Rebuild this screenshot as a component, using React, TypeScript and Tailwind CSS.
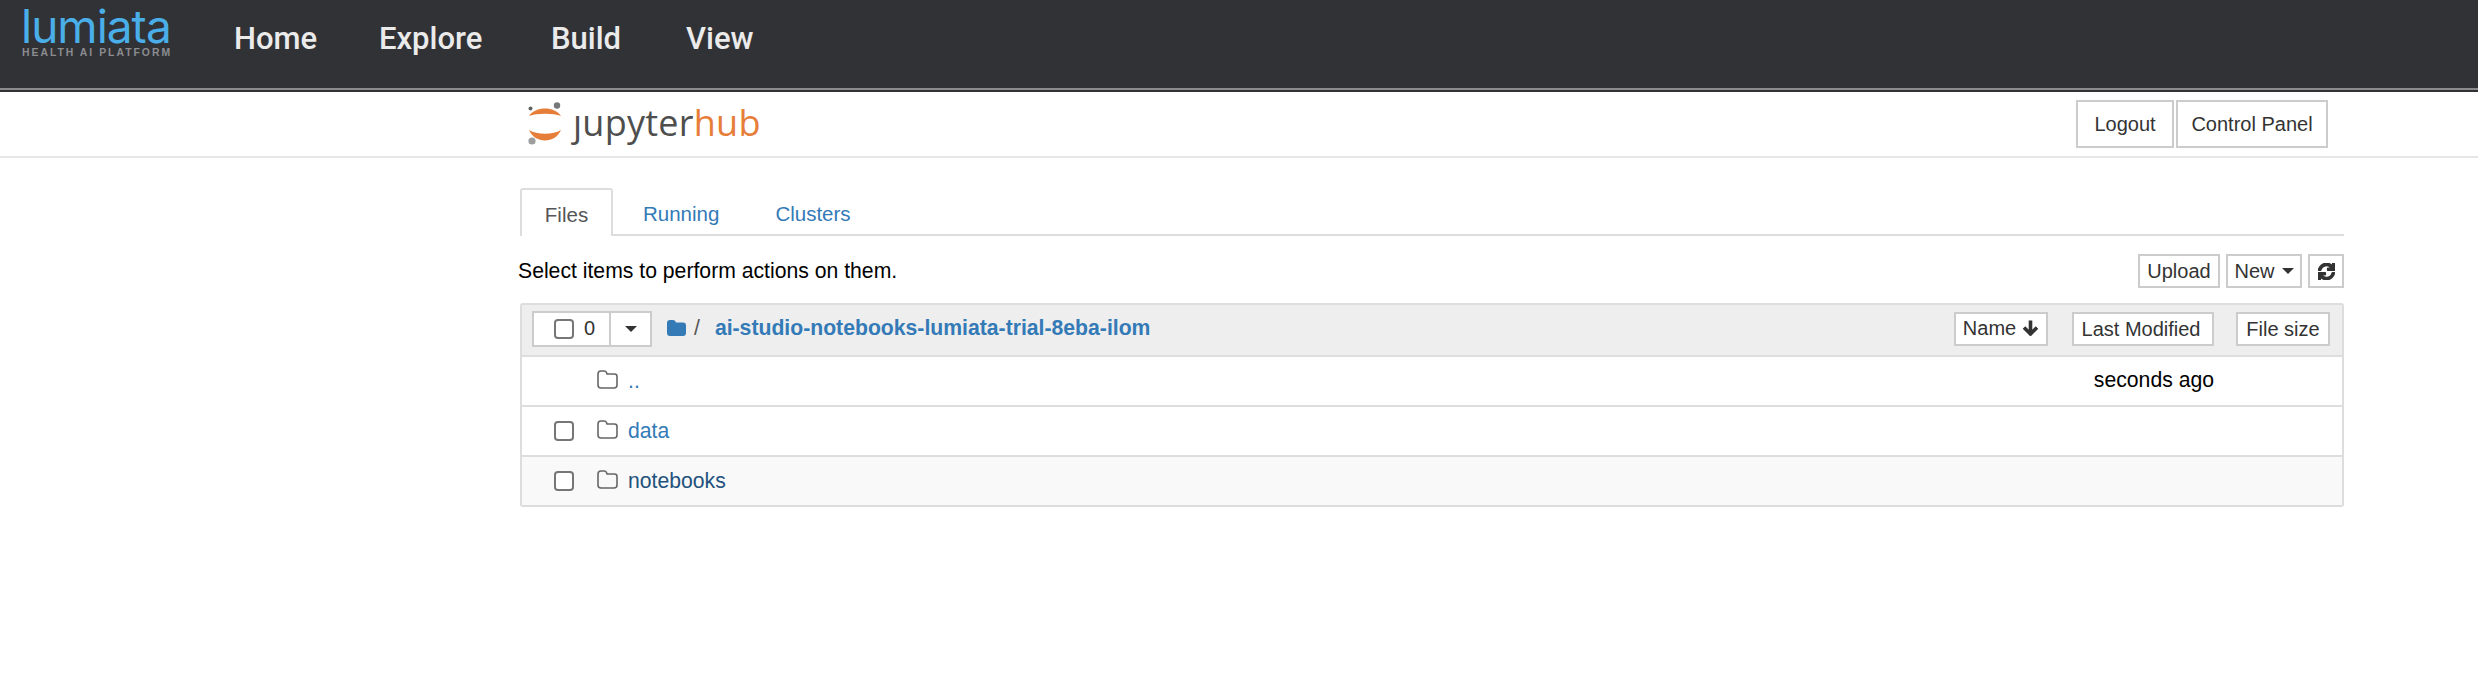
import React from 'react';
import { FaSync } from 'react-icons/fa';

const navItems = [
  { label: 'Home', className: 'w-[145px]' },
  { label: 'Explore', className: 'w-[172px]' },
  { label: 'Build', className: 'w-[135px]' },
  { label: 'View', className: 'w-[90px]' },
];

const Caret = () => (
  <span className="inline-block w-0 h-0 border-x-[6px] border-x-transparent border-t-[6px] border-t-[#333]" />
);

const Checkbox = () => (
  <input
    type="checkbox"
    readOnly
    className="appearance-none block w-5 h-5 bg-white border-2 border-[#767676] rounded-[4px]"
  />
);

const FolderOutline = () => (
  <svg width="21" height="19" viewBox="0 0 21 19" className="shrink-0 -mt-[3px]">
    <path
      d="M1 4 Q1 1 4 1 H7 Q9 1 9.5 2.5 L10 4 H17.5 Q20 4 20 6.5 V15 Q20 18 17 18 H4 Q1 18 1 15 Z"
      fill="none"
      stroke="#666"
      strokeWidth="1.6"
    />
  </svg>
);

const FolderSolid = () => (
  <svg width="19" height="16" viewBox="0 0 19 16" className="shrink-0 -mt-[2px]">
    <path
      d="M0 3 Q0 0 3 0 H6 Q8 0 8.5 1.5 L9 2.5 H16 Q19 2.5 19 5.5 V13 Q19 16 16 16 H3 Q0 16 0 13 Z"
      fill="#337ab7"
    />
  </svg>
);

const ArrowDown = () => (
  <svg width="17" height="17" viewBox="0 0 17 17" className="shrink-0">
    <path d="M8.5 1.5 V14 M2 8.5 L8.5 15 L15 8.5" fill="none" stroke="#333" strokeWidth="3.6" />
  </svg>
);

const JupyterMark = () => (
  <svg width="36" height="44" viewBox="0 0 36 44" className="shrink-0">
    <path d="M2 14 C8 4 28 4 34 14 C26 11 10 11 2 14 Z" fill="#e67e3a" />
    <path d="M2 28 C10 33 26 33 34 28 C28 42 8 42 2 28 Z" fill="#e67e3a" />
    <circle cx="30" cy="3.5" r="3.2" fill="#77787a" />
    <circle cx="3.5" cy="6.5" r="2" fill="#616262" />
    <circle cx="5" cy="39" r="3.6" fill="#9e9e9e" />
  </svg>
);

const FileRow = ({
  name,
  modified,
  striped,
  dark,
  noCheck,
}: {
  name: string;
  modified?: string;
  striped?: boolean;
  dark?: boolean;
  noCheck?: boolean;
}) => (
  <div className={`flex items-center h-[50px] border-t-2 border-[#ddd] ${striped ? 'bg-[#f9f9f9]' : 'bg-white'}`}>
    <div className="w-[32px]" />
    <div className="w-[43px]">{!noCheck && <Checkbox />}</div>
    <FolderOutline />
    <a className={`ml-[10px] pb-[1px] ${dark ? 'text-[#23527c]' : 'text-[#337ab7]'}`}>{name}</a>
    {modified && <span className="ml-auto mr-[128px] pb-[3px] text-black">{modified}</span>}
  </div>
);

export default function App() {
  return (
    <div className="h-[678px] bg-white text-[21.2px] text-[#333] font-['Liberation_Sans',Arial,sans-serif] overflow-hidden">
      {/* Lumiata top bar */}
      <div className="bg-[#313236] h-[92px]">
        <div className="flex h-[88px]">
          <div className="w-[234px] pl-[21px] pt-[5px] shrink-0">
            <div className="text-[#4aaee8] text-[46px] leading-[42px] font-['Inter',sans-serif] font-normal tracking-[-1px]">
              lumiata
            </div>
            <div className="text-[#8b8c90] text-[10.4px] leading-[10px] mt-[1px] font-bold tracking-[2px] pl-[1px] whitespace-nowrap">
              HEALTH AI PLATFORM
            </div>
          </div>
          <nav className="flex items-start pt-[18px] text-[#ebebeb] text-[31px] leading-[42px] font-['Roboto',sans-serif] font-medium">
            {navItems.map((item) => (
              <a key={item.label} className={item.className}>
                {item.label}
              </a>
            ))}
          </nav>
        </div>
        <div className="h-[2px] bg-[#8a8a8a]" />
      </div>

      {/* Hub header */}
      <div className="flex h-[66px] border-b-2 border-[#e7e7e7]">
        <div className="flex items-start ml-[527px] pt-[10px]">
          <JupyterMark />
          <div className="ml-[10px] text-[36px] leading-[42px] font-['Open_Sans',sans-serif] tracking-[0.25px]">
            <span className="text-[#4e4e4e]">ȷupyter</span>
            <span className="text-[#e67e3a]">hub</span>
          </div>
        </div>
        <div className="flex ml-auto mr-[150px] mt-[8px] gap-[2px] h-[48px] text-[20px]">
          <button className="w-[98px] pb-[1px] border-2 border-[#ccc] bg-white">Logout</button>
          <button className="w-[152px] pb-[1px] border-2 border-[#ccc] bg-white">Control Panel</button>
        </div>
      </div>

      <div className="w-[1824px] ml-[520px] mt-[30px]">
        {/* Tabs */}
        <div className="flex h-[48px] border-b-2 border-[#ddd] text-[20.5px]">
          <div className="w-[93px] h-[48px] pt-[4px] flex items-center justify-center border-2 border-b-0 border-[#ddd] bg-white rounded-t-[3px] text-[#555]">
            Files
          </div>
          <a className="ml-[30px] self-center pt-[6px] text-[#337ab7]">Running</a>
          <a className="ml-[56px] self-center pt-[6px] text-[#337ab7]">Clusters</a>
        </div>

        {/* Toolbar */}
        <div className="flex items-center h-[34px] mt-[18px] -ml-[2px]">
          <span className="text-black">Select items to perform actions on them.</span>
          <div className="flex ml-auto h-[34px] gap-[6px] text-[20px]">
            <button className="w-[82px] pb-[1px] border-2 border-[#ccc] bg-white">Upload</button>
            <button className="w-[76px] pb-[1px] border-2 border-[#ccc] bg-white flex items-center justify-center gap-[7px]">
              New <Caret />
            </button>
            <button className="w-[36px] border-2 border-[#ccc] bg-white flex items-center justify-center">
              <FaSync className="w-[17px] h-[17px] text-[#333]" stroke="currentColor" strokeWidth={40} />
            </button>
          </div>
        </div>

        {/* File list */}
        <div className="mt-[15px] border-2 border-[#ddd] rounded-[3px] overflow-hidden">
          <div className="flex items-center h-[50px] pb-[2px] bg-[#eee]">
            <div className="flex ml-[10px] h-[36px] w-[120px] border-2 border-[#ccc] bg-white">
              <div className="flex items-center w-[77px] pl-[20px] gap-[10px] border-r-2 border-[#ccc]">
                <Checkbox />
                <span className="pb-[2px] text-[20px]">0</span>
              </div>
              <div className="flex-1 flex items-center justify-center">
                <Caret />
              </div>
            </div>
            <div className="ml-[15px] flex items-center">
              <FolderSolid />
            </div>
            <span className="ml-[8px] pb-[2px] text-[#555]">/</span>
            <a className="ml-[15px] pb-[2px] font-bold text-[#337ab7]">ai-studio-notebooks-lumiata-trial-8eba-ilom</a>
            <div className="flex ml-auto mr-[12px] h-[34px] text-[20px]">
              <button className="w-[94px] pb-[3px] border-2 border-[#ccc] bg-white flex items-center justify-center gap-[6px]">
                Name <ArrowDown />
              </button>
              <button className="ml-[24px] w-[142px] pb-[3px] pr-[4px] border-2 border-[#ccc] bg-white">Last Modified</button>
              <button className="ml-[22px] w-[94px] pb-[3px] border-2 border-[#ccc] bg-white">File size</button>
            </div>
          </div>
          <FileRow name=".." modified="seconds ago" noCheck />
          <FileRow name="data" />
          <FileRow name="notebooks" striped dark />
        </div>
      </div>
    </div>
  );
}
